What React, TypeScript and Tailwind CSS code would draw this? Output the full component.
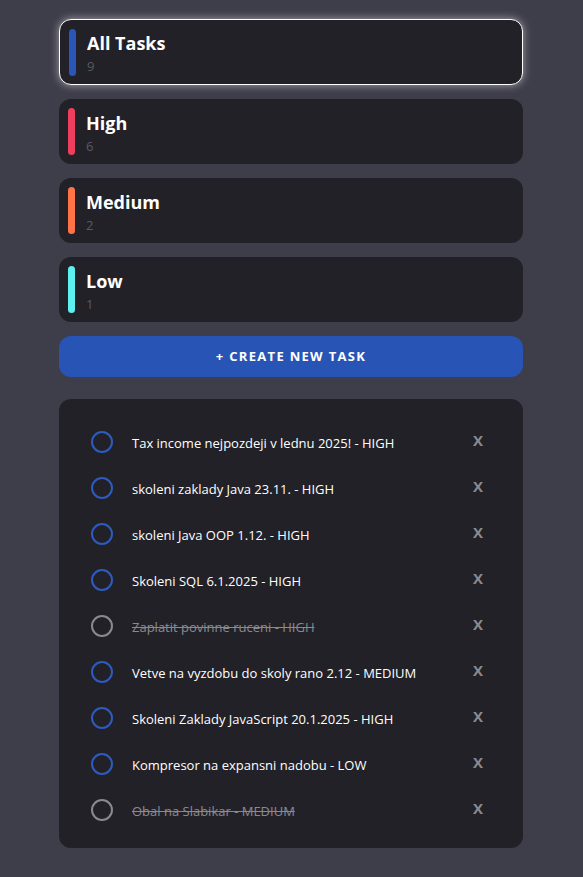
const categories = [
  { name: "All Tasks", count: 9, color: "bg-[#2a56b8]", active: true },
  { name: "High", count: 6, color: "bg-[#ef3f5f]", active: false },
  { name: "Medium", count: 2, color: "bg-[#ff7446]", active: false },
  { name: "Low", count: 1, color: "bg-[#5ef0ee]", active: false },
];

const tasks = [
  { text: "Tax income nejpozdeji v lednu 2025! - HIGH", done: false },
  { text: "skoleni zaklady Java 23.11. - HIGH", done: false },
  { text: "skoleni Java OOP 1.12. - HIGH", done: false },
  { text: "Skoleni SQL 6.1.2025 - HIGH", done: false },
  { text: "Zaplatit povinne ruceni - HIGH", done: true },
  { text: "Vetve na vyzdobu do skoly rano 2.12 - MEDIUM", done: false },
  { text: "Skoleni Zaklady JavaScript 20.1.2025 - HIGH", done: false },
  { text: "Kompresor na expansni nadobu - LOW", done: false },
  { text: "Obal na Slabikar - MEDIUM", done: true },
];

export default function App() {
  return (
    <div className="min-h-[877px] bg-[#3e3d4a] font-['Open_Sans',sans-serif] pt-[19px] pb-[29px]">
      <div className="w-[464px] ml-[59px] flex flex-col">
        <div className="flex flex-col gap-[14px]">
          {categories.map((c) => (
            <div
              key={c.name}
              className={`rounded-[12px] bg-[#222128] flex items-center pl-[9px] ${
                c.active
                  ? "h-[66px] border border-white shadow-[0_0_8px_rgba(255,255,255,0.55)]"
                  : "h-[65px]"
              }`}
            >
              <div className={`w-[7px] h-[47px] rounded-full ${c.color}`} />
              <div className="ml-[11px] flex flex-col pt-[3px]">
                <span className="text-[18px] font-bold text-white leading-[22px]">{c.name}</span>
                <span className="text-[13px] text-[#5b5a62] leading-[18px] mt-[3px]">{c.count}</span>
              </div>
            </div>
          ))}
        </div>

        <button className="mt-[14px] h-[41px] rounded-[12px] bg-[#2855b5] text-white text-[13px] font-bold tracking-[0.1em]">
          + CREATE NEW TASK
        </button>

        <div className="mt-[22px] rounded-[12px] bg-[#222128] pt-[20px] pb-[15px]">
          {tasks.map((t) => (
            <div key={t.text} className="h-[46px] flex items-center pl-[32px] pr-[40px]">
              <div
                className={`w-[22px] h-[22px] rounded-full border-2 shrink-0 ${
                  t.done ? "border-[#8a8a8e]" : "border-[#2d5bbf]"
                }`}
              />
              <span
                className={`ml-[19px] flex-1 text-[13px] mt-[3px] ${
                  t.done ? "text-[#8a8a8e] line-through" : "text-white"
                }`}
              >
                {t.text}
              </span>
              <span className="text-[15px] font-bold text-[#8a8a8e] -mt-[3px]">X</span>
            </div>
          ))}
        </div>
      </div>
    </div>
  );
}
